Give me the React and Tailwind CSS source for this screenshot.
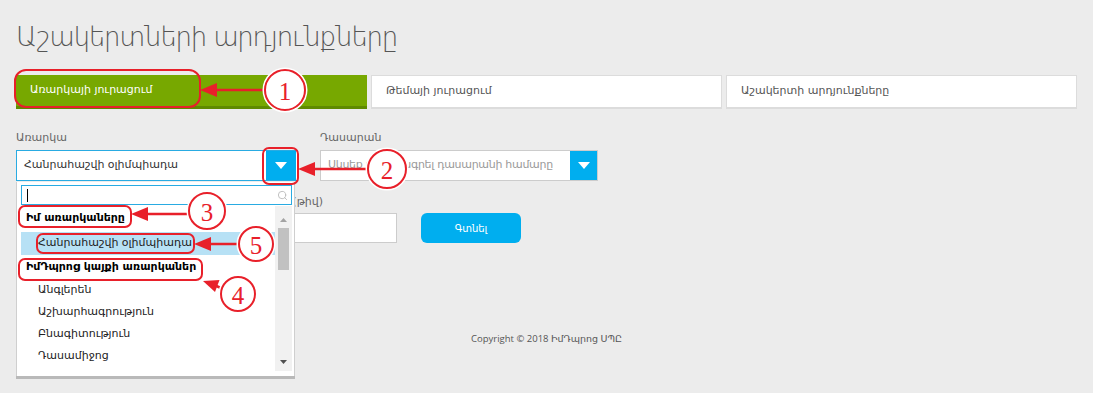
import React from "react";
import { Search } from "lucide-react";

const RED = "#e8202a";

function Callout({ cx, cy, r = 19, n }) {
    return (
        <g>
            <circle cx={cx} cy={cy} r={r + 1.5} fill="none" stroke="#fff" strokeWidth="2" />
            <circle cx={cx} cy={cy} r={r} fill="#fff" stroke={RED} strokeWidth="2" />
            <text
                x={cx}
                y={cy + 1}
                textAnchor="middle"
                dominantBaseline="central"
                fill={RED}
                fontFamily="Liberation Serif, serif"
                fontSize="25"
            >
                {n}
            </text>
        </g>
    );
}

function Annotations() {
    return (
        <svg className="absolute inset-0 pointer-events-none z-20" width="1093" height="393">
            {/* boxes */}
            <rect x="15" y="70" width="185" height="37" rx="11" fill="none" stroke={RED} strokeWidth="2" />
            <rect x="263" y="148" width="35" height="36" rx="6" fill="none" stroke={RED} strokeWidth="2" />
            <rect x="19" y="206" width="112" height="21" rx="6" fill="none" stroke={RED} strokeWidth="2" />
            <rect x="37" y="234" width="157" height="19" rx="6" fill="none" stroke={RED} strokeWidth="2" />
            <rect x="19" y="259" width="183" height="21" rx="6" fill="none" stroke={RED} strokeWidth="2" />

            {/* arrows */}
            <line x1="265" y1="90" x2="214" y2="90" stroke={RED} strokeWidth="2.5" />
            <polygon points="200,90 217,83 217,97" fill={RED} />

            <line x1="368" y1="169" x2="312" y2="169" stroke={RED} strokeWidth="2.5" />
            <polygon points="298,169 315,162 315,176" fill={RED} />

            <line x1="189" y1="214" x2="145" y2="214" stroke={RED} strokeWidth="2.5" />
            <polygon points="131,214 148,207 148,221" fill={RED} />

            <line x1="238" y1="244" x2="208" y2="244" stroke={RED} strokeWidth="2.5" />
            <polygon points="194,244 211,237 211,251" fill={RED} />

            <line x1="221" y1="288" x2="214" y2="285" stroke={RED} strokeWidth="2.5" />
            <polygon points="203,281 219.5,280 215,292" fill={RED} />

            <Callout cx={285} cy={90} r={20} n="1" />
            <Callout cx={387} cy={169} r={19} n="2" />
            <Callout cx={207} cy={211} r={18} n="3" />
            <Callout cx={238} cy={294} r={17} n="4" />
            <Callout cx={256} cy={244} r={17} n="5" />
        </svg>
    );
}

function Caret() {
    return (
        <svg width="12" height="7" viewBox="0 0 12 7">
            <path d="M0 0 L12 0 L6 7 Z" fill="#fff" />
        </svg>
    );
}

function Dropdown() {
    const items = ["Անգլերեն", "Աշխարհագրություն", "Բնագիտություն", "Դասամիջոց"];
    return (
        <div className="absolute left-0 top-[53px] w-[279px] h-[194px] bg-white border-x border-[#cfcfcf] shadow-[0_3px_0_#b9b9b9] z-10 pt-[3px] pl-[4px] pr-[2px]">
            <div className="h-[20px] border border-[#29abe2] flex items-center justify-between pl-[5px] pr-[3px]">
                <div className="w-[1px] h-[13px] bg-black" />
                <Search size={11} strokeWidth={2} className="text-[#bbbbbb]" />
            </div>
            <div className="flex h-[166px] mt-[1px] overflow-hidden">
                <div className="flex-1 text-[11px] text-[#222]">
                    <div className="h-[24px] flex items-center pl-[5px] font-bold text-black">
                        Իմ առարկաները
                    </div>
                    <div className="h-[23px] mt-[2px] flex items-center pl-[17px] bg-[#b7e1f5]">
                        Հանրահաշվի օլիմպիադա
                    </div>
                    <div className="h-[24px] flex items-center pl-[5px] font-bold text-black">
                        ԻմԴպրոց կայքի առարկաներ
                    </div>
                    {items.map(item => (
                        <div key={item} className="h-[22px] flex items-center pl-[17px]">
                            {item}
                        </div>
                    ))}
                </div>
                <div className="w-[17px] h-[165px] bg-[#f1f1f1] flex flex-col items-center">
                    <svg width="7" height="4" viewBox="0 0 7 4" className="mt-[12px]">
                        <path d="M0 4 L7 4 L3.5 0 Z" fill="#a3a3a3" />
                    </svg>
                    <div className="w-[11px] h-[42px] mt-[6px] bg-[#c1c1c1]" />
                    <div className="flex-1" />
                    <svg width="7" height="4" viewBox="0 0 7 4" className="mb-[7px]">
                        <path d="M0 0 L7 0 L3.5 4 Z" fill="#505050" />
                    </svg>
                </div>
            </div>
        </div>
    );
}

export default function App() {
    return (
        <div className="relative w-[1093px] h-[393px] overflow-hidden bg-[#ececec] px-[16px] font-['DejaVu_Sans',sans-serif]">
            <h1 className="pt-[17px] text-[26px] leading-[40px] tracking-[-1.2px] font-light text-[#555555]">
                Աշակերտների արդյունքները
            </h1>

            <div className="mt-[18px] grid grid-cols-3 gap-[4px] h-[34px] text-[11px]">
                <div className="bg-[#77a800] border-b-[3px] border-[#5f8a00] text-white flex items-center pl-[14px]">
                    Առարկայի յուրացում
                </div>
                <div className="bg-white border border-[#dcdcdc] border-b-2 text-[#555] flex items-center pl-[14px]">
                    Թեմայի յուրացում
                </div>
                <div className="bg-white border border-[#dcdcdc] border-b-2 text-[#555] flex items-center pl-[14px]">
                    Աշակերտի արդյունքները
                </div>
            </div>

            <div className="mt-[20px] flex gap-[22px] text-[11px]">
                <div className="relative w-[282px]">
                    <div className="leading-[18px] mb-[3px] text-[#666]">Առարկա</div>
                    <div className="h-[31px] bg-white border border-[#29abe2] flex items-center">
                        <span className="flex-1 pl-[7px] text-[#333]">Հանրահաշվի օլիմպիադա</span>
                        <div className="w-[30px] h-[29px] mr-[1px] bg-[#00aeef] flex items-center justify-center">
                            <Caret />
                        </div>
                    </div>
                    <Dropdown />
                </div>
                <div className="w-[278px]">
                    <div className="leading-[18px] mb-[3px] text-[#666]">Դասարան</div>
                    <div className="h-[31px] bg-white border border-[#cccccc] flex items-center">
                        <span className="flex-1 pl-[7px] whitespace-nowrap overflow-hidden tracking-[-0.3px] text-[#9a9a9a]">
                            Սկսեք մուտքագրել դասարանի համարը
                        </span>
                        <div className="w-[27px] h-[29px] bg-[#00aeef] flex items-center justify-center">
                            <Caret />
                        </div>
                    </div>
                </div>
            </div>

            <div className="mt-[12px] flex items-end gap-[24px] text-[11px]">
                <div className="w-[381px]">
                    <div className="w-[307px] leading-[18px] mb-[2px] flex justify-end whitespace-nowrap overflow-hidden text-[#666]">
                        <span>Ցածր արդյունքներով աշակերտներ (թիվ)</span>
                    </div>
                    <div className="h-[30px] bg-white border border-[#cccccc]" />
                </div>
                <button className="w-[100px] h-[30px] rounded-[6px] bg-[#00aeef] text-white text-[10px]">
                    Գտնել
                </button>
            </div>

            <div className="mt-[89px] text-center text-[9.5px] leading-[14px] text-[#555] font-['Open_Sans','DejaVu_Sans',sans-serif]">
                Copyright © 2018 ԻմԴպրոց ՍՊԸ
            </div>

            <Annotations />
        </div>
    );
}
